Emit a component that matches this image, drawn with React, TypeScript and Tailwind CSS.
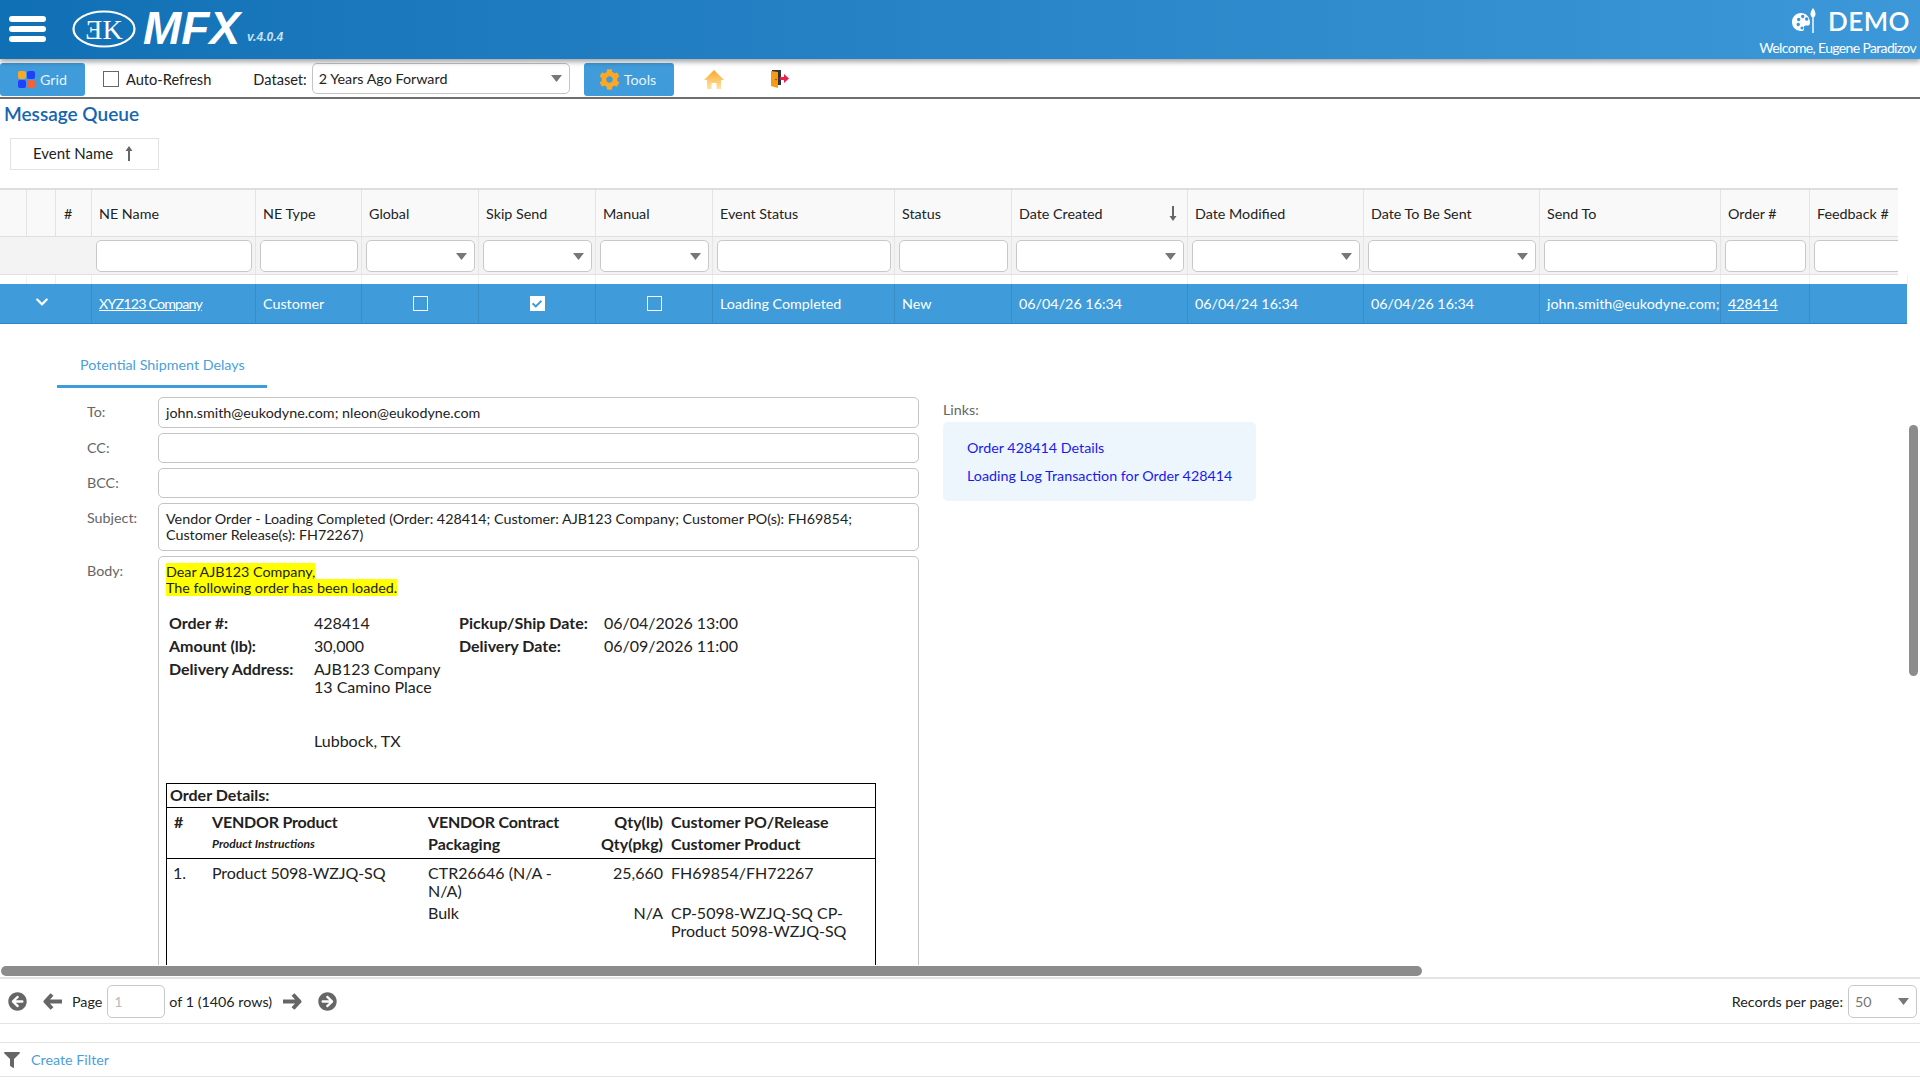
import { FaArrowCircleLeft, FaArrowCircleRight, FaCheck, FaChevronDown, FaCog, FaFilter } from 'react-icons/fa';

const gridCols =
  'grid-cols-[27px_29px_36px_164px_106px_117px_117px_117px_182px_117px_176px_176px_176px_181px_89px_98px]';

interface HeaderCol {
  label: string;
  filter: 'none' | 'text' | 'select';
}

const columns: HeaderCol[] = [
  { label: '', filter: 'none' },
  { label: '', filter: 'none' },
  { label: '#', filter: 'none' },
  { label: 'NE Name', filter: 'text' },
  { label: 'NE Type', filter: 'text' },
  { label: 'Global', filter: 'select' },
  { label: 'Skip Send', filter: 'select' },
  { label: 'Manual', filter: 'select' },
  { label: 'Event Status', filter: 'text' },
  { label: 'Status', filter: 'text' },
  { label: 'Date Created', filter: 'select' },
  { label: 'Date Modified', filter: 'select' },
  { label: 'Date To Be Sent', filter: 'select' },
  { label: 'Send To', filter: 'text' },
  { label: 'Order #', filter: 'text' },
  { label: 'Feedback #', filter: 'text' },
];

function Caret() {
  return (
    <svg width="11" height="7" viewBox="0 0 11 7" className="shrink-0">
      <path d="M0 0h11L5.500 7z" fill="#777777" />
    </svg>
  );
}

function ThickArrow({ flip = false }: { flip?: boolean }) {
  return (
    <svg width="19" height="17" viewBox="0 0 19 17" className={flip ? 'rotate-180' : ''}>
      <path d="M9 1.500 2.500 8.500 9 15.500M3 8.500h16" fill="none" stroke="#666666" strokeWidth="4" strokeLinejoin="round" />
    </svg>
  );
}

function RowCheck({ checked = false }: { checked?: boolean }) {
  return (
    <span className="flex h-[15px] w-[15px] items-center justify-center border border-white bg-transparent data-[on=true]:bg-white" data-on={checked}>
      {checked && <FaCheck className="text-[10px] text-[#3f9bd9]" />}
    </span>
  );
}

function FormRow({ label, className, children }: { label: string; className: string; children?: React.ReactNode }) {
  return (
    <div className="flex">
      <div className="w-[71px] pt-[6px] leading-[18px] text-[#666666]">{label}</div>
      <div className={`w-[761px] rounded-[5px] border border-[#c4c4c4] px-[7px] text-[#222222] ${className}`}>
        {children}
      </div>
    </div>
  );
}

export default function App() {
  return (
    <div className="relative flex h-[1080px] w-[1920px] flex-col overflow-hidden bg-white font-['Lato',sans-serif] text-[14.3px] text-[#222222]">
      {/* top bar */}
      <header className="relative z-10 flex h-[59px] shrink-0 items-start justify-between bg-gradient-to-r from-[#1070b5] to-[#3c98d8] shadow-[0_3px_5px_rgba(0,0,0,0.35)]">
        <div className="flex items-start">
          <div className="ml-[9px] mt-[16px] flex w-[37px] flex-col gap-[4px]">
            <span className="h-[6px] rounded-full bg-white" />
            <span className="h-[6px] rounded-full bg-white" />
            <span className="h-[6px] rounded-full bg-white" />
          </div>
          <svg width="64" height="38" viewBox="0 0 64 38" className="ml-[26px] mt-[10px]">
            <ellipse cx="32" cy="19" rx="30.500" ry="17.500" fill="none" stroke="white" strokeWidth="2.200" />
            <text x="32" y="29" textAnchor="middle" fill="white" fontSize="28" fontFamily="Liberation Serif, serif">ƎK</text>
          </svg>
          <span className="ml-[7px] mt-[2px] font-['Liberation_Sans',sans-serif] text-[46px] font-bold italic leading-[52px] text-white">MFX</span>
          <span className="ml-[7px] mt-[29px] font-['Liberation_Sans',sans-serif] text-[12px] font-bold italic leading-[16px] text-[#c9e2f4]">v.4.0.4</span>
        </div>
        <div className="mr-[4px] flex flex-col items-end">
          <div className="mr-[6px] mt-[6px] flex items-center gap-[12px]">
            <svg width="24" height="26" viewBox="0 0 24 26">
              <path fillRule="evenodd" fill="white" d="M9 5C3.800 5 0 9 0 14c0 5.300 4 9 9 9 2 0 3.500-.8 3-2.800-.4-1.500.3-2.700 2-2.700h2c1.400 0 2-1 2-3C18 9 14 5 9 5zM5 11.500a1.700 1.700 0 1 0 0-.01zM9 8.500a1.700 1.700 0 1 0 0-.01zM13 11a1.700 1.700 0 1 0 0-.01zM4.500 16.500a1.700 1.700 0 1 0 0-.01zM8.500 20a1.500 1.500 0 1 0 0-.01z" />
              <path fill="white" d="M21 0c1.500 2 2.500 4 2.500 6 0 2-1 3-1.800 3.500V25h-1.400V9.500C19.500 9 18.500 8 18.500 6c0-2 1-4 2.500-6z" />
            </svg>
            <span className="text-[26px] font-semibold leading-[30px] tracking-[0.5px] text-white">DEMO</span>
          </div>
          <span className="mt-[3px] text-[14px] leading-[18px] tracking-[-0.65px] text-white">Welcome, Eugene Paradizov</span>
        </div>
      </header>

      {/* toolbar */}
      <div className="flex h-[40px] shrink-0 items-start border-b-2 border-[#6e6e6e] pt-[4px]">
        <button className="flex h-[33px] w-[85px] items-center gap-[5px] rounded-[3px] bg-[#3f9bd9] pl-[18px] text-[#e8f3fb]">
          <svg width="17" height="17" viewBox="0 0 17 17">
            <rect x="0" y="0" width="8" height="8" rx="2" fill="#f9a825" />
            <rect x="9" y="0" width="8" height="8" rx="2" fill="#1e40ff" />
            <rect x="0" y="9" width="8" height="8" rx="2" fill="#1e40ff" />
            <rect x="9" y="9" width="8" height="8" rx="2" fill="#f4623a" />
          </svg>
          Grid
        </button>
        <span className="ml-[18px] mt-[8px] h-[16px] w-[16px] border border-[#666666] bg-white" />
        <span className="ml-[7px] mt-[8px] text-[14.6px] leading-[18px]">Auto-Refresh</span>
        <span className="ml-[42px] mt-[8px] text-[14.6px] leading-[18px]">Dataset:</span>
        <div className="ml-[5px] flex h-[31px] w-[258px] items-center justify-between rounded-[5px] border border-[#c4c4c4] pl-[6px] pr-[7px]">
          2 Years Ago Forward
          <Caret />
        </div>
        <button className="ml-[14px] flex h-[33px] w-[90px] items-center gap-[4px] rounded-[3px] bg-[#3f9bd9] pl-[15px] text-[#e8f3fb]">
          <FaCog className="text-[21px] text-[#fba826]" />
          Tools
        </button>
        <svg width="20" height="19" viewBox="0 0 20 19" className="ml-[30px] mt-[7px]">
          <defs>
            <linearGradient id="homeFill" x1="0" y1="0" x2="0" y2="1">
              <stop offset="0" stopColor="#fba826" />
              <stop offset="1" stopColor="#ffe2a8" />
            </linearGradient>
          </defs>
          <path fill="url(#homeFill)" d="M10 0 20 10h-3v9h-4.500v-6h-5v6H3v-9H0z" />
        </svg>
        <svg width="18" height="18" viewBox="0 0 18 18" className="ml-[47px] mt-[7px]">
          <path fill="#333333" d="M1 0h9v15H1z" />
          <path fill="#f79a14" d="M0 1l7 1v16l-7-2z" />
          <circle cx="5" cy="9.500" r="0.800" fill="#7a4a00" />
          <path fill="#e8214e" d="M9 7h4V4l5 4.500-5 4.500v-3H9z" />
        </svg>
      </div>

      {/* title and grouping */}
      <div className="shrink-0 pl-[4px] pt-[3px] text-[19px] font-semibold leading-[24px] text-[#1565b0]">Message Queue</div>
      <div className="ml-[10px] mt-[12px] flex h-[32px] w-[149px] shrink-0 items-center border border-[#e2e2e2] pb-[1px] pl-[22px] text-[15px]">
        Event Name
        <svg width="8" height="15" viewBox="0 0 8 15" className="ml-[12px]">
          <path fill="#666666" d="M4 0 7.500 5H5v10H3V5H.5z" />
        </svg>
      </div>

      {/* grid */}
      <div className="mt-[18px] w-[1898px] shrink-0 overflow-hidden border-t-2 border-[#dedede]">
        <div className={`grid h-[46px] w-[1905px] bg-[#f9f9f9] text-[14.3px] ${gridCols}`}>
          {columns.map((col, i) => (
            <div key={i} className="relative flex items-center border-r border-[#e3e3e3] pl-[7px] pt-[2px] data-[hash=true]:pl-[8px]" data-hash={col.label === '#'}>
              {col.label}
              {col.label === 'Date Created' && (
                <svg width="8" height="15" viewBox="0 0 8 15" className="absolute right-[10px] top-[16px]">
                  <path fill="#666666" d="M3 0h2v10h2.500L4 15 .5 10H3z" />
                </svg>
              )}
            </div>
          ))}
        </div>
        <div className={`grid h-[39px] w-[1905px] border-y border-[#e0e0e0] bg-[#f3f3f3] ${gridCols}`}>
          {columns.map((col, i) => (
            <div key={i} className="border-r border-[#e6e6e6] data-[blank=true]:border-transparent" data-blank={col.filter === 'none'}>
              {col.filter !== 'none' && (
                <div className="ml-[4px] mr-[3px] mt-[3px] flex h-[32px] items-center justify-end rounded-[5px] border border-[#c8c8c8] bg-white pr-[7px]">
                  {col.filter === 'select' && <Caret />}
                </div>
              )}
            </div>
          ))}
        </div>
      </div>
      <div className={`grid h-[9px] w-[1907px] shrink-0 ${gridCols}`}>
        {columns.map((col, i) => (
          <div key={i} className="border-r border-[#efefef]" />
        ))}
      </div>
      <div className={`grid h-[40px] w-[1907px] shrink-0 border-b border-[#2f86c4] bg-[#3f9bd9] text-white ${gridCols}`}>
        <div />
        <div className="flex items-center justify-center pb-[3px]">
          <FaChevronDown className="text-[14px]" />
        </div>
        <div className="border-r border-[#3a8cc4]" />
        <div className="flex items-center border-r border-[#3a8cc4] pl-[7px] tracking-[-0.85px] underline">XYZ123 Company</div>
        <div className="flex items-center border-r border-[#3a8cc4] pl-[7px]">Customer</div>
        <div className="flex items-center justify-center border-r border-[#3a8cc4]"><RowCheck /></div>
        <div className="flex items-center justify-center border-r border-[#3a8cc4]"><RowCheck checked /></div>
        <div className="flex items-center justify-center border-r border-[#3a8cc4]"><RowCheck /></div>
        <div className="flex items-center border-r border-[#3a8cc4] pl-[7px]">Loading Completed</div>
        <div className="flex items-center border-r border-[#3a8cc4] pl-[7px]">New</div>
        <div className="flex items-center border-r border-[#3a8cc4] pl-[7px]">06/04/26 16:34</div>
        <div className="flex items-center border-r border-[#3a8cc4] pl-[7px]">06/04/24 16:34</div>
        <div className="flex items-center border-r border-[#3a8cc4] pl-[7px]">06/04/26 16:34</div>
        <div className="flex items-center overflow-hidden whitespace-nowrap border-r border-[#3a8cc4] pl-[7px]">john.smith@eukodyne.com;</div>
        <div className="flex items-center border-r border-[#3a8cc4] pl-[7px] underline">428414</div>
        <div />
      </div>

      {/* detail */}
      <div className="min-h-0 flex-1 overflow-hidden">
        <div className="ml-[57px] mt-[32px] w-[210px] border-b-[3px] border-[#3f9bd9] pb-[11px] pl-[23px] leading-[18px] text-[#4a9fdd]">
          Potential Shipment Delays
        </div>
        <div className="ml-[87px] mt-[9px] flex items-start">
          <div className="flex flex-col gap-[5px]">
            <FormRow label="To:" className="flex h-[31px] items-center">john.smith@eukodyne.com; nleon@eukodyne.com</FormRow>
            <FormRow label="CC:" className="h-[30px]" />
            <FormRow label="BCC:" className="h-[30px]" />
            <FormRow label="Subject:" className="h-[48px] pt-[7px] leading-[16px]">
              Vendor Order - Loading Completed (Order: 428414; Customer: AJB123 Company; Customer PO(s): FH69854;
              <br />
              Customer Release(s): FH72267)
            </FormRow>
            <div className="flex">
              <div className="w-[71px] pt-[6px] leading-[18px] text-[#666666]">Body:</div>
              <div className="h-[500px] w-[761px] rounded-[5px] border border-[#c4c4c4] px-[7px] pt-[7px]">
                <div className="leading-[16px]">
                  <span className="bg-[#ffff00]">Dear AJB123 Company,</span>
                  <br />
                  <span className="bg-[#ffff00]">The following order has been loaded.</span>
                </div>
                <div className="ml-[3px] mt-[15px] grid w-[580px] grid-cols-[145px_145px_145px_145px] text-[16px] leading-[18px]">
                  <div className="py-[2.500px] font-bold">Order #:</div>
                  <div className="py-[2.500px]">428414</div>
                  <div className="py-[2.500px] font-bold">Pickup/Ship Date:</div>
                  <div className="py-[2.500px]">06/04/2026 13:00</div>
                  <div className="py-[2.500px] font-bold">Amount (lb):</div>
                  <div className="py-[2.500px]">30,000</div>
                  <div className="py-[2.500px] font-bold">Delivery Date:</div>
                  <div className="py-[2.500px]">06/09/2026 11:00</div>
                  <div className="py-[2.500px] font-bold">Delivery Address:</div>
                  <div className="py-[2.500px]">
                    AJB123 Company<br />13 Camino Place<br /><br /><br />Lubbock, TX
                  </div>
                </div>
                <div className="mt-[31px] w-[710px] border border-black text-[16px] leading-[18px]">
                  <div className="h-[24px] border-b border-black pl-[3px] pt-[2px] font-bold">Order Details:</div>
                  <div className="grid h-[51px] grid-cols-[45px_216px_142px_93px_1fr] content-start border-b border-black pt-[5px] font-bold">
                    <div className="pl-[7px]">#</div>
                    <div className="tracking-[-0.2px]">VENDOR Product</div>
                    <div className="tracking-[-0.2px]">VENDOR Contract</div>
                    <div className="text-right">Qty(lb)</div>
                    <div className="pl-[8px]">Customer PO/Release</div>
                    <div className="col-start-2 mt-[4px] text-[12px] italic">Product Instructions</div>
                    <div className="mt-[4px]">Packaging</div>
                    <div className="mt-[4px] text-right">Qty(pkg)</div>
                    <div className="mt-[4px] pl-[8px]">Customer Product</div>
                  </div>
                  <div className="grid h-[140px] grid-cols-[45px_216px_142px_93px_1fr] content-start pt-[5px]">
                    <div className="pl-[6px]">1.</div>
                    <div className="tracking-[-0.1px]">Product 5098-WZJQ-SQ</div>
                    <div>CTR26646 (N/A - N/A)</div>
                    <div className="text-right">25,660</div>
                    <div className="pl-[8px]">FH69854/FH72267</div>
                    <div className="col-start-3 mt-[4px]">Bulk</div>
                    <div className="mt-[4px] text-right">N/A</div>
                    <div className="mt-[4px] pl-[8px]">CP-5098-WZJQ-SQ CP-Product 5098-WZJQ-SQ</div>
                  </div>
                </div>
              </div>
            </div>
          </div>
          <div className="ml-[24px] w-[313px] pt-[4px]">
            <div className="leading-[18px] text-[#666666]">Links:</div>
            <div className="mt-[3px] flex h-[79px] flex-col gap-[10px] rounded-[5px] bg-[#eef6fd] pl-[24px] pt-[17px] leading-[18px] text-[#1a1aee]">
              <a>Order 428414 Details</a>
              <a>Loading Log Transaction for Order 428414</a>
            </div>
          </div>
        </div>
      </div>

      {/* scrollbars */}
      <div className="h-[14px] shrink-0 border-b-2 border-[#e4e4e4] pl-[1px] pt-[1px]">
        <div className="h-[10px] w-[1421px] rounded-full bg-[#8c8c8c]" />
      </div>
      <div className="absolute left-[1909px] top-[425px] h-[251px] w-[9px] rounded-full bg-[#8c8c8c]" />

      {/* pager */}
      <div className="flex h-[45px] shrink-0 items-center border-b border-[#e4e4e4] pt-[1px] text-[#222222]">
        <FaArrowCircleLeft className="ml-[8px] text-[19px] text-[#666666]" />
        <span className="ml-[16px]"><ThickArrow /></span>
        <span className="ml-[10px]">Page</span>
        <div className="ml-[5px] flex h-[33px] w-[58px] items-center rounded-[5px] border border-[#c8c8c8] pl-[6px] text-[#bbbbbb]">1</div>
        <span className="ml-[4px]">of 1 (1406 rows)</span>
        <span className="ml-[11px]"><ThickArrow flip /></span>
        <FaArrowCircleRight className="ml-[16px] text-[19px] text-[#666666]" />
        <span className="ml-auto">Records per page:</span>
        <div className="ml-[5px] mr-[3px] flex h-[33px] w-[69px] items-center justify-between rounded-[5px] border border-[#c8c8c8] pl-[6px] pr-[7px] text-[#777777]">
          50
          <Caret />
        </div>
      </div>
      <div className="h-[19px] shrink-0 border-b border-[#e4e4e4]" />
      <div className="flex h-[34px] shrink-0 items-center border-b border-[#e4e4e4]">
        <FaFilter className="ml-[4px] text-[16px] text-[#666666]" />
        <span className="ml-[11px] text-[#4a9fdd]">Create Filter</span>
      </div>
      <div className="h-[3px] shrink-0" />
    </div>
  );
}
